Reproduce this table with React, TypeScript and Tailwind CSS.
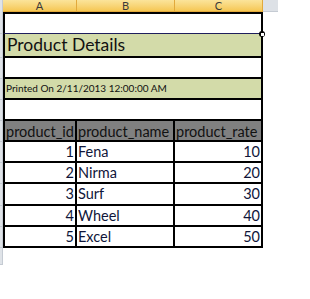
import React from "react";

const font = { fontFamily: "Lato, 'Open Sans', 'Liberation Sans', sans-serif" };

const rows = [
  ["1", "Fena", "10"],
  ["2", "Nirma", "20"],
  ["3", "Surf", "30"],
  ["4", "Wheel", "40"],
  ["5", "Excel", "50"],
];

export default function App() {
  return (
    <div className="relative w-[310px] h-[299px] bg-white overflow-hidden" style={font}>
      {/* column headers */}
      <div className="flex h-[12px]">
        <div className="w-[3px] h-full bg-[#dfe3e8] border-r border-[#c5cbd3]" />
        <div className="flex h-full bg-gradient-to-b from-[#fbe49a] to-[#f5c752] border-b border-[#e2a93b]">
          <div className="w-[74px] h-full border-r border-[#e2a93b] flex justify-center items-center text-[11px] leading-[11px] text-[#3a3a3a]">A</div>
          <div className="w-[98px] h-full border-r border-[#e2a93b] flex justify-center items-center text-[11px] leading-[11px] text-[#3a3a3a]">B</div>
          <div className="w-[88px] h-full border-r border-[#e2a93b] flex justify-center items-center text-[11px] leading-[11px] text-[#3a3a3a]">C</div>
        </div>
        <div className="w-[15px] h-full bg-[#dde1e6] border-b border-[#c5cbd3]" />
      </div>

      <div className="flex">
        {/* row header strip */}
        <div className="w-[3px] flex flex-col bg-[#dfe3e8] border-r border-[#c5cbd3]">
          {[22, 24, 21, 21, 21, 21, 21, 21, 22, 21, 21, 17].map((h, i) => (
            <div key={i} className="border-b border-[#c5cbd3]" style={{ height: h }} />
          ))}
        </div>

        {/* table */}
        <div className="w-[260px] flex flex-col">
          <div className="h-[22px] border-t-2 border-x-2 border-black border-b border-b-[#1f1f5c] bg-white" />
          <div className="h-[24px] bg-[#d3dba9] border-x-2 border-b-2 border-black flex items-center pl-[2px] text-[17.5px] text-[#111]">
            Product Details
          </div>
          <div className="h-[21px] bg-white border-x-2 border-b-2 border-black" />
          <div className="h-[21px] bg-[#d3dba9] border-x-2 border-b-2 border-black flex items-center pl-[1px] text-[10px] text-[#111]">
            Printed On 2/11/2013 12:00:00 AM
          </div>
          <div className="h-[21px] bg-white border-x-2 border-b-2 border-black" />
          <div className="h-[21px] bg-[#808080] border-x-2 border-b-2 border-black flex text-[14.5px] text-[#111]">
            <div className="w-[72px] border-r-2 border-black flex items-end pl-[1px] leading-[17px]">product_id</div>
            <div className="w-[98px] border-r-2 border-black flex items-end pl-[1px] leading-[17px]">product_name</div>
            <div className="flex-1 flex items-end pl-[1px] leading-[17px]">product_rate</div>
          </div>
          {rows.map((r, i) => (
            <div
              key={r[0]}
              className={`${i === 2 ? "h-[22px]" : "h-[21px]"} bg-white border-x-2 border-b-2 border-black flex text-[14.5px] text-[#10163a]`}
            >
              <div className="w-[72px] border-r-2 border-black flex items-center justify-end pr-[1px]">{r[0]}</div>
              <div className="w-[98px] border-r-2 border-black flex items-center pl-[1px]">{r[1]}</div>
              <div className="flex-1 flex items-center justify-end pr-[1px]">{r[2]}</div>
            </div>
          ))}
        </div>
      </div>

      {/* fill handle */}
      <div className="absolute left-[259px] top-[31px] w-[6px] h-[6px] bg-black rounded-full flex items-center justify-center">
        <div className="w-[3px] h-[3px] bg-white" />
      </div>
    </div>
  );
}
